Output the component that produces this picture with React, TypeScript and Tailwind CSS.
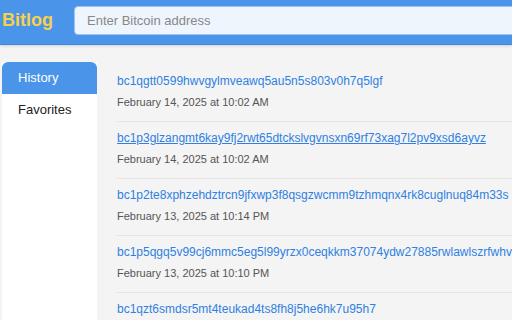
const items = [
  { address: "bc1qgtt0599hwvgylmveawq5au5n5s803v0h7q5lgf", date: "February 14, 2025 at 10:02 AM" },
  { address: "bc1p3glzangmt6kay9fj2rwt65dtckslvgvnsxn69rf73xag7l2pv9xsd6ayvz", date: "February 14, 2025 at 10:02 AM", hover: true },
  { address: "bc1p2te8xphzehdztrcn9jfxwp3f8qsgzwcmm9tzhmqnx4rk8cuglnuq84m33s", date: "February 13, 2025 at 10:14 PM" },
  { address: "bc1p5qgq5v99cj6mmc5eg5l99yrzx0ceqkkm37074ydw27885rwlawlszrfwhv", date: "February 13, 2025 at 10:10 PM" },
  { address: "bc1qzt6smdsr5mt4teukad4ts8fh8j5he6hk7u95h7", date: "February 13, 2025 at 9:58 PM" },
]

export default function App() {
  return (
    <div className="h-[320px] w-[512px] overflow-hidden bg-[#f4f4f4] font-['Liberation_Sans',Arial,sans-serif]">
      <header className="relative z-10 flex h-[45px] items-start border-b border-[#3b86e0] bg-[#4a94ea] pt-[6px] shadow-[0_1px_3px_rgba(0,0,0,0.15)]">
        <div className="flex h-[29px] w-[74px] shrink-0 items-center pl-[2px] text-[18px] font-bold text-[#f7d14a]">Bitlog</div>
        <input
          className="h-[29px] w-[500px] shrink-0 rounded-[4px] border border-[#9cc4f3] bg-[#eef5fd] px-[12px] text-[13px] text-[#333] placeholder-[#888] outline-none"
          placeholder="Enter Bitcoin address"
        />
      </header>
      <div className="flex pl-[2px] pt-[17px]">
        <nav className="h-[260px] w-[95px] shrink-0 bg-white">
          <div className="flex h-[32px] items-center rounded-t-[6px] bg-[#4a94ea] pl-[16px] text-[13px] text-white">History</div>
          <div className="flex h-[32px] items-center pl-[16px] text-[13px] text-[#222]">Favorites</div>
        </nav>
        <main className="min-w-0 flex-1 pl-[20px] pt-[3px]">
          {items.map((it) => (
            <div key={it.address} className="border-b border-[#e6e6e6] pb-[11px] pt-[8px]">
              <div className={`whitespace-nowrap text-[12px] leading-[16px] text-[#2f80e2] ${it.hover ? "underline" : ""}`}>
                {it.address}
              </div>
              <div className="mt-[5px] whitespace-nowrap text-[11px] leading-[16px] text-[#555]">{it.date}</div>
            </div>
          ))}
        </main>
      </div>
    </div>
  )
}
